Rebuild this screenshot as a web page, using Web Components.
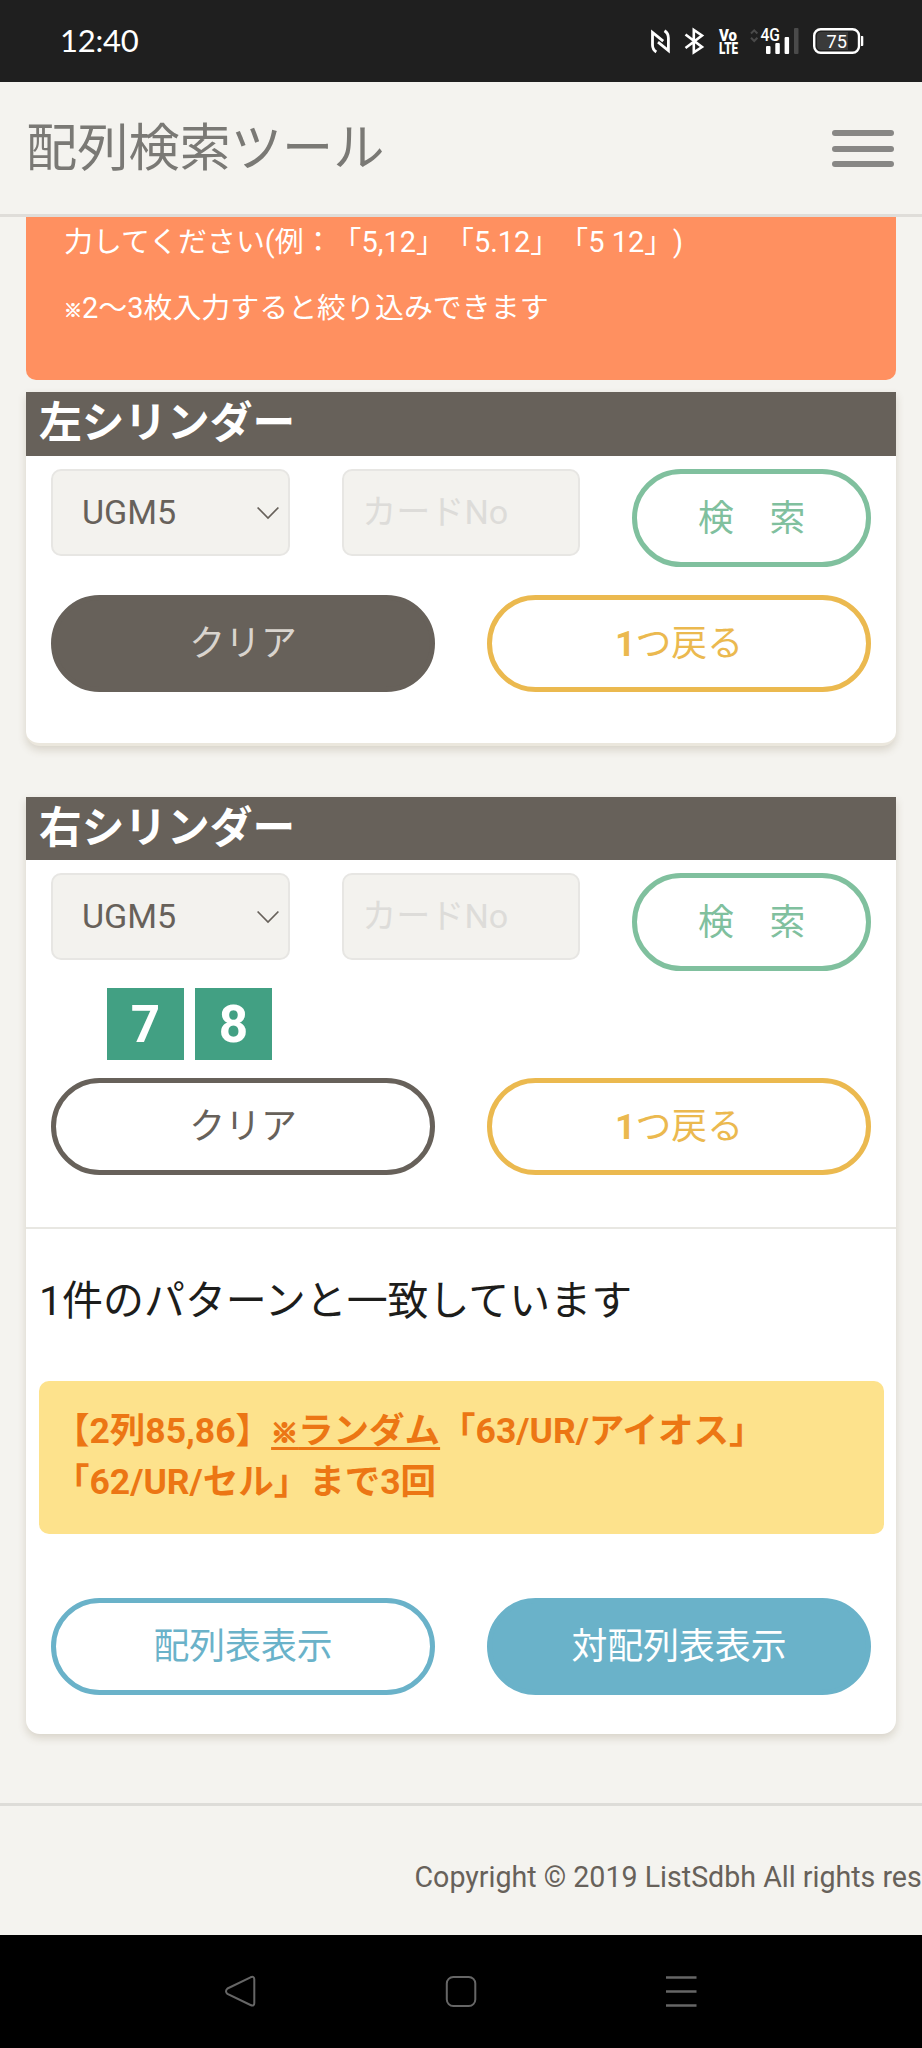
<!DOCTYPE html>
<html lang="ja">
<head>
<meta charset="utf-8">
<title>配列検索ツール</title>
<style>
html,body{margin:0;padding:0}
body{width:922px;height:2048px;overflow:hidden;background:#f4f3ef;font-family:Roboto,"Noto Sans CJK JP",sans-serif;color:#67615a;text-spacing-trim:space-all;text-autospace:no-autospace;font-size:35.84px}
</style>
</head>
<body>
<search-page></search-page>
<script>
const define = (name, html) => {
  const t = document.createElement('template');
  t.innerHTML = html;
  customElements.define(name, class extends HTMLElement {
    constructor() {
      super();
      this.attachShadow({mode: 'open'}).append(t.content.cloneNode(true));
    }
  });
};

define('status-bar', `
<style>
:host{display:flex;height:82px;background:#1f1f1f;color:#fff;align-items:center;justify-content:space-between;box-sizing:border-box;padding:0 0 0 60px}
.time{font:400 31px/40px Lato,sans-serif;letter-spacing:-.25px;padding-bottom:2px}
svg{display:block}
text{font-family:Roboto,sans-serif}
</style>
<span class="time">12:40</span>
<svg width="282" height="82" viewBox="640 0 282 82" fill="none">
  <g stroke="#fff" stroke-width="2.8" stroke-linejoin="miter">
    <path d="M656.300 52Q652.500 49.500 652.500 45V32.500L663.200 41.200M664.500 30.800Q668.400 33.300 668.400 38V50.600L658 42.200"/>
    <path d="M685.500 34.500L702 47L693.800 52.400V30L702 35.500L685.500 48" stroke-width="2.600"/>
  </g>
  <g fill="#fff">
    <text x="719" y="40.600" font-size="16" font-weight="900" textLength="18" lengthAdjust="spacingAndGlyphs">Vo</text>
    <text x="719" y="53.600" font-size="16.500" font-weight="900" textLength="19" lengthAdjust="spacingAndGlyphs">LTE</text>
    <text x="760.500" y="41" font-size="17.500" font-weight="500" textLength="19.500" lengthAdjust="spacingAndGlyphs">4G</text>
    <rect x="766" y="46" width="4.500" height="8" rx="1"/>
    <rect x="775.300" y="43" width="4.500" height="11" rx="1"/>
    <rect x="784.600" y="37" width="4.500" height="17" rx="1"/>
    <rect x="794" y="28" width="4.500" height="26" rx="1" fill="#4a4a4a"/>
    <path d="M861 36h1.500q.8 0 .8 1v8q0 1-.8 1H861z"/>
  </g>
  <path d="M751 33.500l3.200-3.200 3.200 3.200M751 37.800l3.200 3.200 3.200-3.200" stroke="#4a4a4a" stroke-width="2"/>
  <path d="M821 32h27v18h-27q-4 0-4-4v-10q0-4 4-4z" fill="#3a3a3a"/>
  <rect x="814.200" y="29.300" width="44.800" height="23.500" rx="6.500" stroke="#fff" stroke-width="2.400"/>
  <text x="826.500" y="47.700" font-size="18.500" fill="#fff" font-weight="400" textLength="20.500" lengthAdjust="spacingAndGlyphs">75</text>
</svg>`);

define('app-header', `
<style>
:host{display:flex;height:135px;box-sizing:border-box;border-bottom:3px solid #dfddd9;align-items:center;justify-content:space-between;padding:1px 28px 0 26px;color:#7a7975}
h1{margin:0;font-weight:400;font-size:51.200px;line-height:64px}
.menu{display:grid;gap:9.500px;width:62px}
i{height:6px;border-radius:3px;background:#888785}
</style>
<h1><slot></slot></h1><div class="menu"><i></i><i></i><i></i></div>`);

define('hint-box', `
<style>
:host{display:block;box-sizing:border-box;height:163px;margin:0 26px;padding:0 38px;border-radius:0 0 10px 10px;background:#ff9060;color:#fff;font-size:28.950px;line-height:50px}
</style><slot></slot>`);

define('hint-line', `
<style>:host{display:block;white-space:nowrap;margin-bottom:16px}</style><slot></slot>`);

define('cylinder-card', `
<style>
:host{display:flex;flex-direction:column;box-sizing:border-box;margin:0 26px;background:#fff;border-radius:0 0 14px 14px;box-shadow:0 4px 8px rgba(103,85,50,.2)}
h2{margin:0;height:var(--bar,64px);box-sizing:border-box;background:#67615a;color:#fff;padding-left:13px;font-size:42.700px;line-height:63px;font-weight:700}
</style>
<h2><slot name="title"></slot></h2><slot></slot>`);

define('form-row', `
<style>:host{display:grid;grid-template-columns:repeat(var(--cols,2),1fr);column-gap:52px;padding:0 25px;align-items:start}</style><slot></slot>`);

define('select-box', `
<style>
:host{display:flex;box-sizing:border-box;height:87px;border:2px solid #e7e6e3;border-radius:10px;background:#f3f2ee;align-items:center;justify-content:space-between;padding:0 9px 0 29px;font-size:34.100px}
span{padding-bottom:2px}
svg{display:block}
</style>
<span><slot></slot></span>
<svg width="22" height="14" viewBox="0 0 22 14" fill="none" stroke="#67615a" stroke-width="1.700"><path d="M.6 1.500L11 12L21.400 1.500"/></svg>`);

define('text-field', `
<style>
:host{display:flex;box-sizing:border-box;height:87px;border:2px solid #e7e6e3;border-radius:10px;background:#f3f2ee;align-items:center;padding:0 18.500px 7px;color:#dddcd9;white-space:nowrap;font-size:34.100px}
</style><span><slot></slot></span>`);

define('pill-button', `
<style>
:host{display:flex;box-sizing:border-box;height:97.500px;border:5px solid var(--c);border-radius:49px;background:var(--bg,transparent);color:var(--fg,var(--c));align-items:center;justify-content:center;white-space:pre;padding-bottom:6px}
</style><span><slot></slot></span>`);

define('number-tile', `
<style>:host{display:flex;width:77px;height:72px;background:#42a083;color:#fff;font-size:51.200px;font-weight:700;align-items:center;justify-content:center}</style><slot></slot>`);

define('result-panel', `
<style>
:host{display:block;border-top:2px solid #e8e7e2;color:#1d1d1b}
p{margin:40px 0 0 13px;font-size:40.960px;line-height:64px;white-space:nowrap}
.match{box-sizing:border-box;height:153px;margin:48px 12.500px 0;padding:25px 15.500px;border-radius:10px;background:#fde28c;color:#ec7614;font-weight:700;font-size:35.500px;line-height:51.200px;white-space:nowrap}
</style>
<p><slot name="count"></slot></p><div class="match"><slot></slot></div>`);

define('page-footer', `
<style>:host{display:flex;box-sizing:border-box;height:132px;margin-top:69px;border-top:3px solid #dddcd8;padding:51px 0 0 414.500px;overflow:hidden;white-space:nowrap;font-size:28.600px;line-height:40px}</style><span><slot></slot></span>`);

define('nav-bar', `
<style>:host{display:block;height:113px;background:#000}svg{display:block}</style>
<svg width="922" height="113" viewBox="0 1935 922 113" fill="none" stroke="#666" stroke-width="2">
<path d="M227.500 1988.500L250.500 1977.300Q254.300 1975.800 254.300 1979.500V2003Q254.300 2006.800 250.500 2005L227.500 1994Q224.500 1991.300 227.500 1988.500Z"/>
<rect x="446.800" y="1977" width="28.500" height="29" rx="6.500"/>
<path d="M666 1977.500H696.500M666 1991.500H696.500M666 2005.500H696.500" stroke-width="2.400"/>
</svg>`);

define('search-page', `
<style>
:host{display:flex;flex-direction:column;height:2048px;--green:#80c09e;--gold:#ebb94f;--dark:#67615a;--blue:#6ab2c9}
cylinder-card.left{margin-top:12px;height:354px;border-bottom:3px solid #ebe7dd}
cylinder-card.right{margin-top:51px;height:937px;--bar:63px}
.inputs{--cols:3;padding-top:13px}
.tiles{display:flex;gap:11px;padding:17.500px 0 0 81px;height:72px}
.u{text-decoration:underline;text-decoration-thickness:3px;text-underline-offset:4px}
.mark{font-family:"Noto Sans CJK JP",sans-serif;line-height:1}
b{font-weight:700}
</style>
<status-bar></status-bar>
<app-header>配列検索ツール</app-header>
<hint-box>
  <hint-line>力してください(例：「5,12」「5.12」「5 12」)</hint-line>
  <hint-line><span class="mark" style="font-size:18px;-webkit-text-stroke:.7px #fff;vertical-align:1px">※</span>2～3枚入力すると絞り込みできます</hint-line>
</hint-box>
<cylinder-card class="left">
  <span slot="title">左シリンダー</span>
  <form-row class="inputs"><select-box>UGM5</select-box><text-field>カードNo</text-field><pill-button style="--c:var(--green)">検　索</pill-button></form-row>
  <form-row style="padding-top:28px"><pill-button style="--c:var(--dark);--bg:var(--dark);--fg:#d9d4ce">クリア</pill-button><pill-button style="--c:var(--gold)"><b>1</b>つ戻る</pill-button></form-row>
</cylinder-card>
<cylinder-card class="right">
  <span slot="title">右シリンダー</span>
  <form-row class="inputs"><select-box>UGM5</select-box><text-field>カードNo</text-field><pill-button style="--c:var(--green)">検　索</pill-button></form-row>
  <div class="tiles"><number-tile>7</number-tile><number-tile>8</number-tile></div>
  <form-row style="padding:17.500px 25px 51.500px"><pill-button style="--c:var(--dark)">クリア</pill-button><pill-button style="--c:var(--gold)"><b>1</b>つ戻る</pill-button></form-row>
  <result-panel>
    <span slot="count">1件のパターンと一致しています</span>
    【2列85,86】<span class="u"><span class="mark" style="font-size:27px;-webkit-text-stroke:1.800px #ec7614">※</span>ランダム</span>「63/UR/アイオス」<br>「62/UR/セル」まで3回
  </result-panel>
  <form-row style="padding-top:64px"><pill-button style="--c:var(--blue)">配列表表示</pill-button><pill-button style="--c:var(--blue);--bg:var(--blue);--fg:#fff">対配列表表示</pill-button></form-row>
</cylinder-card>
<page-footer>Copyright © 2019 ListSdbh All rights res</page-footer>
<nav-bar></nav-bar>`);
</script>
</body>
</html>
